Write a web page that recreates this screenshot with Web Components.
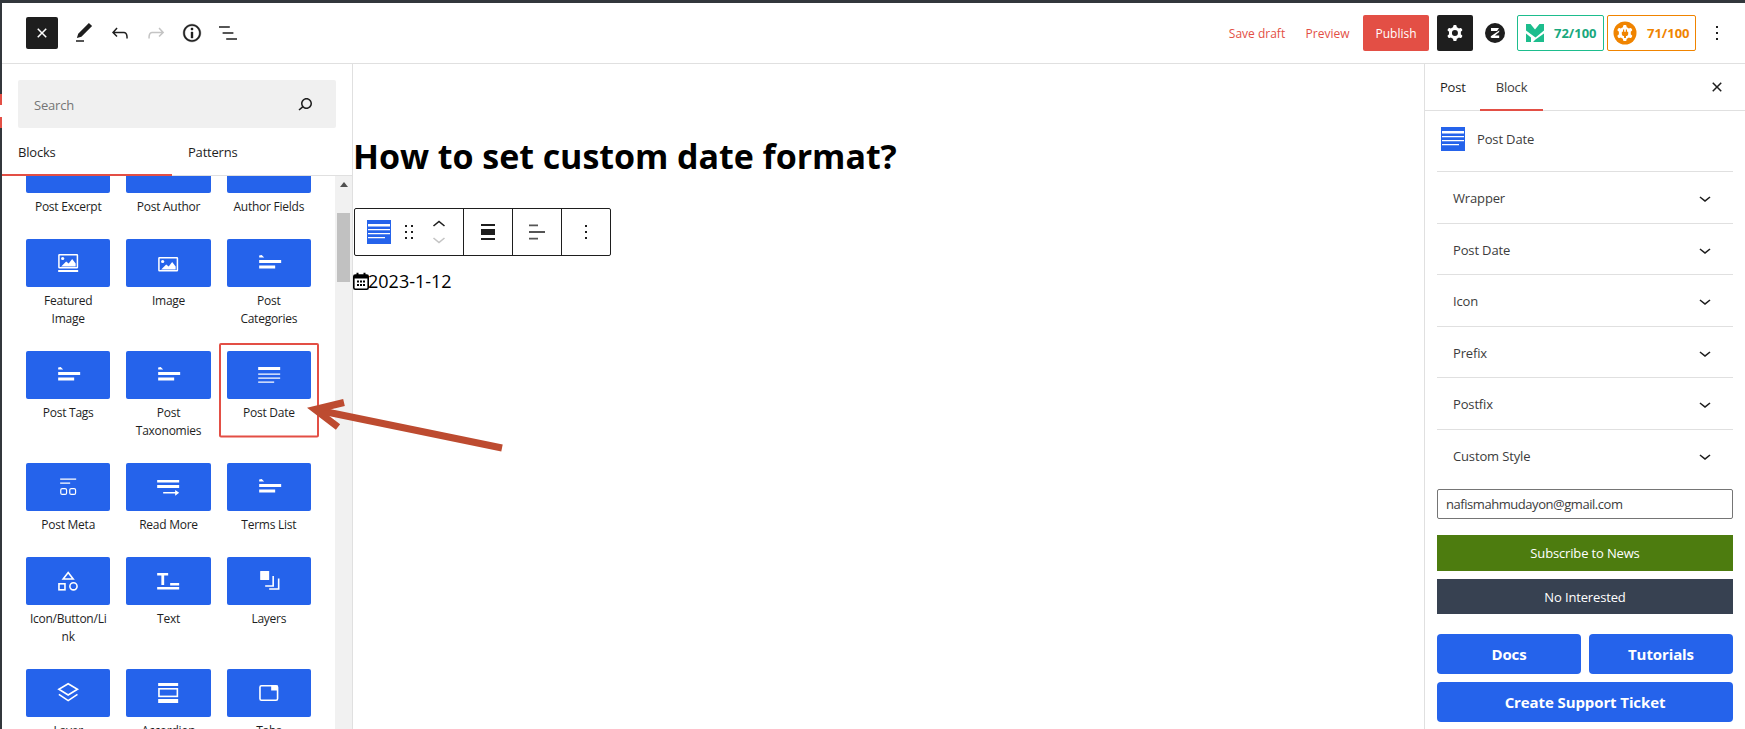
<!DOCTYPE html>
<html lang="en"><head><meta charset="utf-8"><title>Post Date</title>
<style>
html,body{margin:0;padding:0;width:1745px;height:729px;overflow:hidden;background:#fff}
body{font-family:"Open Sans","Noto Sans",sans-serif;color:#1e1e1e}
</style></head><body>
<wp-editor></wp-editor>
<script>
const P={
 pencil:'<path d="M20.1 5.1L16.9 2 6.2 12.7l-1.3 4.4 4.5-1.3L20.1 5.1zM4 20.8h8v-1.5H4v1.5z"/>',
 undo:'<path d="M18.3 11.7c-.6-.6-1.4-.9-2.3-.9H6.7l2.9-3.3-1.1-1-4.5 5L8.5 16l1-1-2.7-2.7H16c.5 0 .9.2 1.3.5 1 1 1 3.4 1 4.5v.3h1.5v-.2c0-1.5 0-4.3-1.5-5.7z"/>',
 redo:'<path d="M15.6 6.5l-1.1 1 2.9 3.3H8c-.9 0-1.7.3-2.3.9-1.4 1.5-1.4 4.2-1.4 5.6v.2h1.5v-.3c0-1.1 0-3.5 1-4.5.3-.3.7-.5 1.3-.5h9.2L14.5 15l1.1 1.1 4.6-4.6-4.6-5z"/>',
 info:'<path stroke="currentColor" stroke-width=".4" d="M12 3.2c-4.8 0-8.8 3.9-8.8 8.8 0 4.8 3.9 8.8 8.8 8.8 4.8 0 8.8-3.9 8.8-8.8 0-4.8-4-8.8-8.8-8.8zm0 16c-4 0-7.2-3.3-7.2-7.2C4.8 8 8 4.8 12 4.8s7.2 3.3 7.2 7.2c0 4-3.2 7.2-7.2 7.2zM11 17h2v-6h-2v6zm0-8h2V7h-2v2z"/>',
 list:'<path d="M13.8 5.2H3v1.5h10.8V5.2zm-3.6 12v1.5H21v-1.5H10.2zm7.2-6H6.6v1.5h10.8v-1.5z"/>',
 close:'<path d="M12 13.06l3.712 3.713 1.061-1.06L13.061 12l3.712-3.712-1.06-1.06L12 10.938 8.288 7.227l-1.061 1.06L10.939 12l-3.712 3.712 1.06 1.061L12 13.061z"/>',
 search:'<path d="M13.5 6C10.5 6 8 8.5 8 11.5c0 1.1.3 2.1.9 3l-3.4 3 1 1.1 3.4-2.9c1 .9 2.2 1.4 3.6 1.4 3 0 5.5-2.5 5.5-5.5C19 8.5 16.5 6 13.5 6zm0 9.5c-2.2 0-4-1.8-4-4s1.8-4 4-4 4 1.8 4 4-1.8 4-4 4z"/>',
 cog:'<path fill-rule="evenodd" clip-rule="evenodd" d="M10.289 4.836A1 1 0 0111.275 4h1.306a1 1 0 01.987.836l.244 1.466c.787.26 1.503.679 2.108 1.218l1.393-.522a1 1 0 011.216.437l.653 1.13a1 1 0 01-.23 1.273l-1.148.944a6.025 6.025 0 010 2.435l1.149.946a1 1 0 01.23 1.272l-.653 1.13a1 1 0 01-1.216.437l-1.394-.522c-.605.54-1.32.958-2.108 1.218l-.244 1.466a1 1 0 01-.987.836h-1.306a1 1 0 01-.986-.836l-.244-1.466a5.995 5.995 0 01-2.108-1.218l-1.394.522a1 1 0 01-1.217-.436l-.653-1.131a1 1 0 01.23-1.272l1.149-.946a6.026 6.026 0 010-2.435l-1.148-.944a1 1 0 01-.23-1.272l.653-1.131a1 1 0 011.217-.437l1.393.522a5.994 5.994 0 012.108-1.218l.244-1.466zM14.929 12a3 3 0 11-6 0 3 3 0 016 0z"/>',
 kebab:'<path d="M13 19h-2v-2h2v2zm0-6h-2v-2h2v2zm0-6h-2V5h2v2z"/>',
 chevron:'<path d="M17.5 11.6L12 16l-5.5-4.4.9-1.2L12 14l4.5-3.6 1 1.2z"/>',
 drag:'<path d="M8 7h2V5H8v2zm0 6h2v-2H8v2zm0 6h2v-2H8v2zm6-14v2h2V5h-2zm0 8h2v-2h-2v2zm0 6h2v-2h-2v2z"/>',
 wide:'<path d="M5 4h14v2H5zM5 9h14v6H5zM5 18h14v2H5z"/>',
 left:'<path d="M4 4.500h9v1.800H4zM4 11.100h16v1.800H4zM4 17.700h9v1.800H4z" fill="#555"/>'
};
const tag='<path d="M32 18.600V16.400L34.500 16L37 18.600Z M32 21h22v3H32z M32 26.500h16v3H32z" fill="#fff"/>';
const T={
 blank:'',
 featured:'<rect x="32.750" y="15.750" width="18.500" height="13" fill="none" stroke="#fff" stroke-width="1.500" rx=".5"/><path d="M35 27.500l5-5 2.500 2 3.500-4.500 3.500 4.500v3z" fill="#fff"/><circle cx="36.500" cy="19.500" r="1.600" fill="#fff"/><path d="M32 31h20v2H32z" fill="#fff"/>',
 image:'<rect x="32.750" y="18.750" width="18.500" height="13" fill="none" stroke="#fff" stroke-width="1.500" rx=".5"/><path d="M35 30.500l5-5 2.500 2 3.500-4.500 3.500 4.500v3z" fill="#fff"/><circle cx="36.500" cy="22.500" r="1.600" fill="#fff"/>',
 tag:tag,
 date:'<path d="M31 16h22v3H31z M31 22.500h22v1.300H31z M31 26.500h22v1.300H31z M31 30.500h16v1.300H31z" fill="#fff"/>',
 meta:'<path d="M34 15.500h16v1.200H34z M34 19.500h10v1.200H34z" fill="#fff"/><rect x="34.600" y="25.600" width="5.800" height="5.800" rx="1.500" fill="none" stroke="#fff" stroke-width="1.200"/><rect x="43.600" y="25.600" width="5.800" height="5.800" rx="1.500" fill="none" stroke="#fff" stroke-width="1.200"/>',
 more:'<path d="M31 17h22v2.600H31z M31 22h22v3H31z M37 29h13v1.400H37z M49 27l4 2.700-4 3z" fill="#fff"/>',
 icons:'<path d="M42 15.500L47 22H37z" fill="none" stroke="#fff" stroke-width="1.600"/><rect x="32.800" y="26.800" width="6" height="6" fill="none" stroke="#fff" stroke-width="1.600"/><circle cx="47.300" cy="29.300" r="3.600" fill="none" stroke="#fff" stroke-width="1.600"/>',
 text:'<path d="M31 16h11v2.500H38v9.500H35.200V18.500H31z M44 26h9v2.500h-9z M31 30h22v2.600H31z" fill="#fff"/>',
 layers:'<rect x="33" y="14" width="9" height="9" rx=".5" fill="#fff"/><path d="M46 19V29H38 M51.500 21.500V32H42" fill="none" stroke="#fff" stroke-width="1.600"/>',
 layer:'<path d="M42 14.800L51.300 20.300 42 26 32.700 20.300Z M32.700 25.300L42 31.600 51.300 25.300" fill="none" stroke="#fff" stroke-width="1.600"/>',
 accordion:'<path d="M32 14h20v3H32z M32 30h20v4H32z" fill="#fff"/><rect x="32.800" y="19.800" width="18.400" height="7.600" fill="none" stroke="#fff" stroke-width="1.600"/>',
 tabs:'<rect x="32.800" y="16.800" width="17.600" height="14.400" rx="1.500" fill="none" stroke="#fff" stroke-width="1.600"/><path d="M44 16.500h6.500V21.500H44z" fill="#fff"/>'
};
function svg(name,size=24,color='currentColor'){return `<svg width="${size}" height="${size}" viewBox="0 0 24 24" fill="${color}" aria-hidden="true">${P[name]}</svg>`}
const blockGlyph=(s)=>`<svg width="${s}" height="${s}" viewBox="0 0 24 24"><rect width="24" height="24" fill="#2563eb"/><path d="M1 4h22v2.400H1z M1 9h22v1.200H1z M1 13h22v1.200H1z M1 17h17v1.200H1z" fill="#fff"/></svg>`;
function define(tag,css,html){
  customElements.define(tag,class extends HTMLElement{
    constructor(){super();this.attachShadow({mode:'open'})}
    connectedCallback(){this.shadowRoot.innerHTML=`<style>${css}</style>`+(typeof html==='function'?html(this):html)}
  });
}
define('wp-tile',`:host{display:block;text-align:center;font-size:12px;line-height:18px;color:#1e1e1e}
 .b{height:48px;background:#2563eb;border-radius:2px}svg{display:block}
 .l{margin-top:5px;white-space:pre;letter-spacing:var(--ls,-.25px)}`,
 e=>`<div class="b"><svg width="100%" height="48" viewBox="0 0 84 48">${T[e.getAttribute('icon')]||''}</svg></div><div class="l">${e.getAttribute('label').replace(/\\n/g,'\n')}</div>`);
define('wp-scrollbar',`:host{display:block;width:17px;height:100%;background:#f1f1f1;flex:none}
 .u{width:0;height:0;margin:6px auto 0;border:4px solid transparent;border-top:0;border-bottom:5px solid #505050}
 .t{width:13px;height:69px;margin:26px auto 0;background:#c1c1c1}`,`<div class="u"></div><div class="t"></div>`);
define('wp-inserter',`:host{display:flex;flex-direction:column;width:350px;border-right:1px solid #e0e0e0;height:100%;overflow:hidden;flex:none}
 .s{margin:16px 16px 0;height:48px;background:#f0f0f0;border-radius:2px;display:flex;align-items:center;justify-content:space-between;padding:1px 19.500px 0 16px;box-sizing:border-box;font-size:13px;color:#757575;flex:none;letter-spacing:-.2px}
 .s span{padding-top:1px}
 .s svg{display:block;color:#1e1e1e;margin-top:-2px}
 .tabs{height:47px;display:flex;border-bottom:1px solid #e0e0e0;flex:none;font-size:13px;color:#1e1e1e;letter-spacing:-.2px}
 .tab{width:170px;padding:1px 0 0 16px;box-sizing:border-box;line-height:46px}
 .tab.on{border-bottom:2px solid #e34f45;box-sizing:content-box;width:154px;height:45px;margin-bottom:-1px}
 .body{flex:1;display:flex;min-height:0;overflow:hidden}
 .list{flex:1;padding:0 24px;min-width:0;overflow:hidden}
 .g{margin-top:-31px;display:grid;grid-template-columns:repeat(3,1fr);column-gap:16px;row-gap:23px}`,
 `<div class="s"><span>Search</span>${svg('search',24)}</div>
  <div class="tabs"><div class="tab on">Blocks</div><div class="tab">Patterns</div></div>
  <div class="body"><div class="list"><div class="g">
   <wp-tile icon="blank" label="Post Excerpt"></wp-tile><wp-tile icon="blank" label="Post Author"></wp-tile><wp-tile icon="blank" label="Author Fields"></wp-tile>
   <wp-tile icon="featured" label="Featured\\nImage"></wp-tile><wp-tile icon="image" label="Image"></wp-tile><wp-tile icon="tag" label="Post\\nCategories"></wp-tile>
   <wp-tile icon="tag" label="Post Tags"></wp-tile><wp-tile icon="tag" label="Post\\nTaxonomies"></wp-tile><wp-tile icon="date" label="Post Date"></wp-tile>
   <wp-tile icon="meta" label="Post Meta"></wp-tile><wp-tile icon="more" label="Read More"></wp-tile><wp-tile icon="tag" label="Terms List"></wp-tile>
   <wp-tile icon="icons" label="Icon/Button/Li\\nnk"></wp-tile><wp-tile icon="text" label="Text"></wp-tile><wp-tile icon="layers" label="Layers"></wp-tile>
   <wp-tile icon="layer" label="Layer"></wp-tile><wp-tile icon="accordion" label="Accordion"></wp-tile><wp-tile icon="tabs" label="Tabs"></wp-tile>
  </div></div><wp-scrollbar></wp-scrollbar></div>`);
const cogPath=P.cog.match(/ d="([^"]+)"/)[1].replace(/M14\.929.*$/,'');
define('wp-header',`:host{display:flex;align-items:center;height:60px;border-bottom:1px solid #e0e0e0;flex:none;padding-left:24px;padding-right:16px}
 svg{display:block;flex:none}
 .x{width:32px;height:32px;background:#1e1e1e;border-radius:2px;color:#fff;display:flex;align-items:center;justify-content:center}
 .ic{width:24px;height:24px;margin-left:12px}.ic.first{margin-left:14px}.dim{color:#c4c4c4}
 .sp{flex:1}
 .lnk{font-size:12px;color:#e34f45;text-align:center}
 .pub{width:66px;height:36px;background:#e34f45;color:#fff;font-size:12px;border-radius:2px;display:flex;align-items:center;justify-content:center;margin-left:2.500px}
 .cog{width:36px;height:36px;background:#1e1e1e;color:#fff;border-radius:2px;display:flex;align-items:center;justify-content:center;margin-left:8px}
 .logo{margin-left:12px;margin-right:12px}
 .bd{height:36px;box-sizing:border-box;border:1px solid;border-radius:2px;display:flex;align-items:center;font-size:13px;font-weight:700}
 .g{width:87px;border-color:#1dbd8d;color:#19a87d;padding-left:8px;margin-right:3px}
 .o{width:89px;border-color:#f08400;color:#f08400;padding-left:5px;margin-right:9px}
 .g span{margin-left:10px}.o span{margin-left:10px}`,
 `<div class="x">${svg('close',24)}</div>
  <div class="ic first">${svg('pencil')}</div><div class="ic">${svg('undo')}</div><div class="ic dim">${svg('redo')}</div><div class="ic">${svg('info')}</div><div class="ic">${svg('list')}</div>
  <div class="sp"></div>
  <div class="lnk" style="width:72px">Save draft</div><div class="lnk" style="width:66px;margin-left:1.500px">Preview</div>
  <div class="pub">Publish</div><div class="cog">${svg('cog',24)}</div>
  <div class="logo"><svg width="20" height="20" viewBox="0 0 20 20"><circle cx="10" cy="10" r="10" fill="#1e1e1e"/><path d="M6 5h8l-2 3H6z M14.200 7.500v1.600L7 14.800H5.800v-1.600z M9 12.500h5.200V15H6.500z" fill="#fff"/></svg></div>
  <div class="bd g"><svg width="18" height="18" viewBox="0 0 18 18" fill="#1dbd8d"><path d="M0 0h4.500L9 5.500 13.500 0H18v6.500L9.500 13.500 0 6.500z"/><path d="M0 9.500L5 13.500V18H0z M18 9.500V18H7L9.500 15.500z"/></svg><span>72/100</span></div>
  <div class="bd o"><svg width="24" height="24" viewBox="0 0 24 24"><circle cx="12" cy="12" r="11.500" fill="#f08400"/><path fill="#fff" d="${cogPath}" transform="translate(-.1 0)"/><path d="M10 8.500v2.200H8.800v2.200c0 1.200.9 2 2.200 2.100V17h2v-2c1.300-.1 2.200-.9 2.200-2.100v-2.200H14V8.500h-1.200v2.200h-1.600V8.500z" fill="#f08400"/></svg><span>71/100</span></div>
  <div style="color:#1e1e1e">${svg('kebab')}</div>`);
define('wp-toolbar',`:host{display:flex;width:257px;height:48px;box-sizing:border-box;border:1px solid #1e1e1e;border-radius:2px;background:#fff}
 .c{display:flex;align-items:center;justify-content:center;flex:none}.c:last-child{flex:1}svg{display:block;flex:none}
 .sep{border-left:1px solid #1e1e1e;box-sizing:border-box}
 .m{display:flex;flex-direction:column;margin-left:9px}`,
 `<div class="c" style="width:108px;padding-left:12px;justify-content:flex-start;box-sizing:border-box">${blockGlyph(24)}<span style="margin-left:6px">${svg('drag',24)}</span>
   <div class="m"><svg width="18" height="14" viewBox="0 0 18 14" fill="none" stroke="#1e1e1e" stroke-width="1.600"><path d="M3.500 8L9 3.500 14.500 8"/></svg><svg width="18" height="14" viewBox="0 0 18 14" fill="none" stroke="#c4c4c4" stroke-width="1.600"><path d="M3.500 6L9 10.500 14.500 6"/></svg></div></div>
  <div class="c sep" style="width:49px">${svg('wide')}</div><div class="c sep" style="width:49px">${svg('left')}</div><div class="c sep">${svg('kebab')}</div>`);
define('wp-canvas',`:host{display:block;flex:1;min-width:0;padding:70px 0 0 1px}
 h1{margin:0 0 0 -1px;font-size:34px;line-height:44px;font-weight:700;color:#000;letter-spacing:-.05px;white-space:nowrap}
 wp-toolbar{margin-top:30px}
 .d{display:flex;align-items:center;margin:14px 0 0 -1px;font-size:18px;line-height:22px;color:#000;height:22px}
 .d span{margin-left:-1px}
 svg{display:block;flex:none}`,
 `<h1>How to set custom date format?</h1><wp-toolbar></wp-toolbar>
  <div class="d"><svg width="16" height="18" viewBox="0 0 16 18"><rect x=".8" y="3" width="14.400" height="14.200" rx="1.500" fill="none" stroke="#000" stroke-width="1.600"/><path d="M1 3h14v3.500H1z M3.500 .8h2v3h-2z M10.500 .8h2v3h-2z" fill="#000"/><path d="M4 8.500h2v2H4z M7 8.500h2v2H7z M10 8.500h2v2h-2z M4 12h2v2H4z M7 12h2v2H7z M10 12h2v2h-2z" fill="#000"/></svg><span>2023-1-12</span></div>`);
define('wp-row',`:host{display:flex;align-items:center;justify-content:space-between;height:51.500px;box-sizing:border-box;border-top:1px solid #e0e0e0;padding:2px 16px 0;font-size:13px;color:#3c3c3c;letter-spacing:-.15px}svg{display:block;color:#1e1e1e}`,
 e=>`<slot></slot>${svg('chevron',24)}`);
define('wp-sidebar',`:host{display:block;width:320px;border-left:1px solid #e0e0e0;height:100%;flex:none;font-size:13px;color:#1e1e1e}
 .tabs{height:46px;border-bottom:1px solid #e0e0e0;display:flex;align-items:center;padding-left:15px;letter-spacing:-.2px}
 .tabs .a{width:40px;line-height:46px;flex:none}
 .tabs .b{width:63px;height:45px;line-height:46px;text-align:center;border-bottom:2px solid #e34f45;margin-bottom:-1px;color:#3c3c3c;flex:none}
 .tabs svg{display:block;margin-left:auto;margin-right:16px}
 .h{height:60px;display:flex;align-items:center;padding-left:16px;gap:12px;color:#3c3c3c;letter-spacing:-.15px;box-sizing:border-box;padding-bottom:4px}
 .h svg{display:block}
 .w{margin:0 12px}
 .in{margin-top:9px;height:30px;box-sizing:border-box;border:1px solid #757575;border-radius:2px;padding-left:8px;display:flex;align-items:center;color:#3c3c3c;font-size:13px;letter-spacing:-.45px}
 .btn{display:flex;align-items:center;justify-content:center;color:#fff}
 .sub{background:#4d7c0f;height:36px;margin-top:16px;font-size:13px;letter-spacing:-.15px}
 .no{background:#374151;height:35px;margin-top:8px;font-size:13px;letter-spacing:-.15px}
 .two{display:grid;grid-template-columns:1fr 1fr;gap:8px;margin-top:20px}
 .bl{background:#2563eb;height:40px;border-radius:4px;font-weight:700;font-size:15px;letter-spacing:-.1px}
 .full{margin-top:8px}`,
 `<div class="tabs"><div class="a">Post</div><div class="b">Block</div>${svg('close',24)}</div>
  <div class="h">${blockGlyph(24)}<span>Post Date</span></div>
  <div class="w"><wp-row>Wrapper</wp-row><wp-row>Post Date</wp-row><wp-row>Icon</wp-row><wp-row>Prefix</wp-row><wp-row>Postfix</wp-row><wp-row>Custom Style</wp-row>
   <div class="in">nafismahmudayon@gmail.com</div>
   <div class="btn sub">Subscribe to News</div><div class="btn no">No Interested</div>
   <div class="two"><div class="btn bl">Docs</div><div class="btn bl">Tutorials</div></div>
   <div class="btn bl full">Create Support Ticket</div></div>`);
define('wp-annotation',`:host{position:absolute;left:0;top:0;width:1745px;height:729px;pointer-events:none}svg{display:block}`,
 `<svg width="1745" height="729" viewBox="0 0 1745 729" fill="none"><rect x="220" y="344" width="98" height="92.500" stroke="#e34f45" stroke-width="2" rx="1"/>
  <path d="M502 448L322 411" stroke="#bd4b30" stroke-width="7"/><path d="M344 402.500L315 409.500L338 427" stroke="#bd4b30" stroke-width="7" stroke-linejoin="miter"/></svg>`);
define('wp-editor',`:host{display:flex;flex-direction:column;width:1745px;height:729px;position:relative;overflow:hidden;background:#fff}
 .top{height:3px;background:#32373c;flex:none}
 .row{flex:1;display:flex;min-height:0}
 .strip{width:2px;flex:none;background:linear-gradient(#32373c 91px,#e34f45 91px,#e34f45 102px,#fff 102px,#fff 114px,#e34f45 114px,#e34f45 125px,#32373c 125px)}
 .col{flex:1;display:flex;flex-direction:column;min-width:0}
 .main{flex:1;display:flex;min-height:0}`,
 `<div class="top"></div><div class="row"><div class="strip"></div><div class="col"><wp-header></wp-header><div class="main"><wp-inserter></wp-inserter><wp-canvas></wp-canvas><wp-sidebar></wp-sidebar></div></div></div><wp-annotation></wp-annotation>`);
</script>
</body></html>
